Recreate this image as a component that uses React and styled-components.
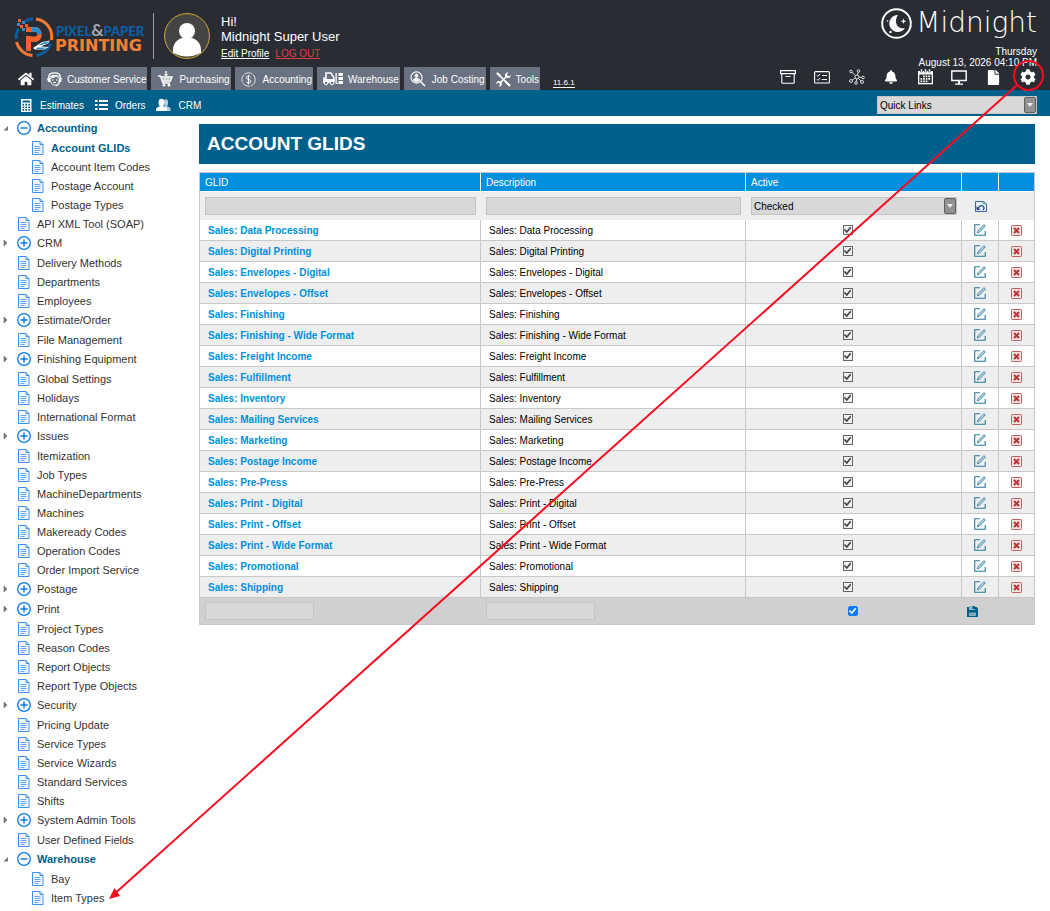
import React from "react";
import styled, { createGlobalStyle, css } from "styled-components";
import {
  FaHome,
  FaBell,
  FaCog,
  FaFile,
} from "react-icons/fa";

const GlobalStyle = createGlobalStyle`
  * {
    box-sizing: border-box;
  }
  body {
    margin: 0;
    background: #ffffff;
    color: #000000;
    font-family: "Liberation Sans", Arial, Helvetica, sans-serif;
    font-size: 10px;
  }
  button, input, select {
    font: inherit;
    color: inherit;
    margin: 0;
  }
  a {
    color: inherit;
    text-decoration: none;
  }
  ul {
    list-style: none;
    margin: 0;
    padding: 0;
  }
  svg {
    display: block;
    flex: none;
  }
`;

const Page = styled.div`
  position: relative;
`;

const Header = styled.header`
  display: flex;
  justify-content: space-between;
  min-height: 90px;
  background: #2a2c34;
  color: #ffffff;
`;

const HeaderLeft = styled.div`
  display: flex;
  flex-direction: column;
  justify-content: space-between;
  padding: 13px 0 0 14px;
`;

const Brand = styled.div`
  display: flex;
  align-items: center;
  height: 46px;
`;

const Divider = styled.span`
  width: 1px;
  height: 46px;
  margin: 0 10px 0 8px;
  background: #9a9ca3;
`;

const Profile = styled.div`
  margin-left: 11px;
  padding-top: 2px;
  font-size: 13px;
  line-height: 15px;
`;

const ProfileLinks = styled.div`
  display: flex;
  gap: 6px;
  margin-top: 4px;
  font-size: 10px;
  line-height: 12px;
  a {
    text-decoration: underline;
  }
  a:last-child {
    color: #e23b42;
  }
`;

const Tabs = styled.nav`
  display: flex;
  align-items: center;
  gap: 4px;
`;

const HomeLink = styled.a`
  padding: 1px 2px 0 4px;
  margin-right: 1px;
`;

const Tab = styled.a`
  display: flex;
  align-items: center;
  gap: 5px;
  height: 23px;
  padding: 1px 1px 0 6px;
  background: #6a7281;
  white-space: nowrap;
`;

const Version = styled.a`
  align-self: flex-end;
  margin: 0 0 2px 9px;
  font-size: 8px;
  line-height: 9px;
  border-bottom: 1px solid #ffffff;
`;

const HeaderRight = styled.div`
  display: flex;
  flex-direction: column;
  align-items: flex-end;
  padding: 5px 13px 0 0;
`;

const Midnight = styled.div`
  display: flex;
  align-items: center;
  gap: 4px;
  height: 36px;
  font-family: "DejaVu Sans", sans-serif;
  font-size: 28px;
  font-weight: 200;
  line-height: 36px;
`;

const Clock = styled.div`
  margin-top: 5px;
  line-height: 11px;
  text-align: right;
`;

const Shortcuts = styled.nav`
  display: flex;
  justify-content: space-between;
  width: 258px;
  a {
    display: flex;
    align-items: center;
    justify-content: center;
    width: 18px;
    height: 18px;
  }
`;

const SubBar = styled.div`
  display: flex;
  align-items: center;
  justify-content: space-between;
  height: 26px;
  padding: 4px 13px 0 20px;
  background: #00608c;
  color: #ffffff;
`;

const SubNav = styled.nav`
  display: flex;
  gap: 11px;
  a {
    display: flex;
    align-items: center;
    gap: 7px;
  }
`;

const SelectBox = styled.div`
  position: relative;
  width: ${(props) => props.width || "100%"};
  color: #000000;
  select {
    display: block;
    appearance: none;
    width: 100%;
    height: 18px;
    padding: 0 20px 0 2px;
    background: #d8d8d8;
    border: 1px solid #c4c4c4;
    border-radius: 0;
  }
  svg {
    position: absolute;
    top: 1px;
    right: 1px;
    pointer-events: none;
  }
`;

const Main = styled.div`
  display: flex;
  align-items: flex-start;
`;

const Sidebar = styled.nav`
  flex: none;
  width: 199px;
  padding: 2px 0 3px;
`;

const TreeLink = styled.a`
  display: flex;
  align-items: center;
  gap: 6px;
  height: ${(props) => (props.$branch ? 20 : 19)}px;
  padding-left: ${(props) => (props.$child ? 17 : 3)}px;
  font-size: 11px;
  color: #333333;
  white-space: nowrap;
  ${(props) =>
    props.$active &&
    css`
      font-weight: 700;
      color: #00608c;
    `}
`;

const TreeIcons = styled.span`
  display: flex;
  align-items: center;
  svg:first-child {
    margin-right: 8px;
  }
`;

const Content = styled.main`
  flex: 1;
  min-width: 0;
  padding: 8px 15px 0 0;
`;

const Title = styled.h1`
  margin: 0 0 8px;
  padding: 0 8px;
  background: #00608c;
  color: #ffffff;
  font-size: 19px;
  font-weight: 700;
  line-height: 40px;
`;

const Table = styled.table`
  width: 100%;
  table-layout: fixed;
  border-collapse: separate;
  border-spacing: 0;
  border: 1px solid #c8c8c8;
  th,
  td {
    height: 21px;
    padding: 0;
    text-align: left;
  }
`;

const HeadCell = styled.th`
  && {
    height: 19px;
    padding: 0 5px;
  }
  background: #0090dd;
  color: #ffffff;
  font-weight: 400;
  border-bottom: 1px solid #ffffff;
  &:not(:last-child) {
    border-right: 1px solid #ffffff;
  }
`;

const FilterRow = styled.tr`
  background: #eeeeee;
  && td {
    height: 28px;
    padding: 0 5px;
  }
`;

const Row = styled.tr`
  background: ${(props) => (props.$shaded ? "#eeeeee" : "#ffffff")};
  td {
    border-bottom: 1px solid #c8c8c8;
  }
  td:not(:last-child) {
    border-right: 1px solid #c8c8c8;
  }
  && td:nth-child(-n + 2) {
    padding-left: 8px;
  }
  && td:nth-child(3) {
    padding-right: 12px;
  }
`;

const AddRow = styled.tr`
  background: #d0d0d0;
  && td {
    height: 26px;
    padding: 0 8px 0 5px;
  }
`;

const TextInput = styled.input`
  display: block;
  width: ${(props) => props.width || "100%"};
  height: 18px;
  padding: 0 2px;
  background: #d8d8d8;
  border: 1px solid #c4c4c4;
`;

const RecordLink = styled.a`
  color: #0090dd;
  font-weight: 700;
`;

const Tick = styled.input`
  appearance: none;
  display: block;
  width: 10px;
  height: 10px;
  margin: 0 auto;
  background: ${(props) => (props.$on ? "#0a7aff" : "#f2f2f2")};
  border: 1px solid ${(props) => (props.$on ? "#0a7aff" : "#666666")};
  border-radius: ${(props) => (props.$on ? 2 : 0)}px;
  &:checked::after {
    content: "";
    display: block;
    width: 8px;
    height: 8px;
    background: ${(props) => (props.$on ? "#ffffff" : "#444444")};
    clip-path: polygon(4% 50%, 20% 36%, 40% 60%, 82% 8%, 98% 22%, 42% 92%);
  }
`;

const IconButton = styled.button`
  display: block;
  margin: ${(props) => (props.$start ? "0" : "0 auto")};
  padding: 0;
  border: 0;
  background: none;
`;

const Callout = styled.svg`
  position: absolute;
  top: 0;
  left: 0;
  width: 100%;
  pointer-events: none;
`;

const PrintingLogo = () => (
  <svg width="131" height="44" viewBox="14 14 131 44" role="img">
    <g fill="none" strokeWidth="3">
      <path d="M36 19a18 18 0 0 1 15.500 21" stroke="#f47a33" />
      <path d="M16.500 42a18 18 0 0 0 16 13.500" stroke="#f47a33" />
      <path d="M50.500 43.500a18 18 0 0 1-14 12" stroke="#0a5c9c" />
      <path d="M16.200 39a18 18 0 0 1 2-10M25 21.200a18 18 0 0 1 8-2.400" stroke="#0a5c9c" />
    </g>
    <path d="M26 27h9c9 0 9 15 0 15h-4v9h-5V36h9c3 0 3-4 0-4h-9z" fill="#f4622c" />
    <path d="M32 27h3c5 0 7 5 6 8-3 0-4-3-9-3z" fill="#2d8ccb" />
    <path d="M31 32h4c3 0 3 4.500 0 4.500h-4z" fill="#2a2c34" />
    <path d="M18 19h3v3h-3zM20 25h3v3h-3zM25 24h3v3h-3z" fill="#f4622c" />
    <path d="M22 21h3v3h-3zM17 23h3v3h-3zM22 28h3v3h-3z" fill="#2d8ccb" />
    <path d="M33 48l9-6 8-1.500-2 3-7 3 8 .5-5 2.500H35z" fill="#ffffff" />
    <path d="M38 45.500l5-3 6-1.300-2 2.300-6 1.500zM37 47.500h10l-4 1.500h-7z" fill="#2d8ccb" />
    <text x="56" y="36" fill="#0a62a5" fontFamily="Lato" fontWeight="900" fontSize="13">
      PIXEL
      <tspan fill="#a5a7ab" fontSize="17" fontWeight="700">&amp;</tspan>
      PAPER
    </text>
    <text x="55" y="51" fill="#f68034" fontFamily="DejaVu Sans" fontWeight="700" fontSize="16">
      PRINTING
    </text>
  </svg>
);

const Avatar = () => (
  <svg width="46" height="46" viewBox="0 0 46 46">
    <circle cx="23" cy="23" r="22.400" fill="#444444" stroke="#d5a932" />
    <circle cx="23" cy="18" r="8" fill="#ffffff" />
    <path d="M9 40v-3c0-17 28-17 28 0v3q-14 7-28 0z" fill="#ffffff" />
  </svg>
);

const MoonIcon = () => (
  <svg width="31" height="31" viewBox="0 0 31 31">
    <circle cx="15.500" cy="15.500" r="14.300" fill="none" stroke="#ffffff" strokeWidth="2" />
    <path d="M17 7a8.500 8.500 0 1 0 7 13c-7 2-12-6-7-13z" fill="#ffffff" />
    <path d="M22.500 10.500l.8 2 2 .8-2 .8-.8 2-.8-2-2-.8 2-.8z" fill="#ffffff" />
    <circle cx="6.500" cy="13" r=".8" fill="#ffffff" />
    <circle cx="9.500" cy="24" r="1.200" fill="#ffffff" />
  </svg>
);

const ServiceIcon = () => (
  <svg width="15" height="15" viewBox="0 0 15 15">
    <path d="M2 7C1 2 4 .8 7.500 .8S14 2 13 7" fill="none" stroke="#ffffff" strokeWidth="1.300" />
    <path d="M3 6c2 0 5-1 6-2 1 1 2 2 3.500 2-.2 5-2 7-5 7S3.200 10 3 6z" fill="none" stroke="#ffffff" />
    <path d="M3 5c1-3 8-3 9.500 0L9 4 6 5.500zM0 6h3v4H1zM12 6h3l-1 4h-2z" fill="#ffffff" />
    <path d="M5 8h1.500M9 8h1.500M6 10.500h3M12.500 10q0 4-4 4" stroke="#ffffff" fill="none" />
  </svg>
);

const CartIcon = () => (
  <svg width="17" height="16" viewBox="0 0 17 16">
    <path d="M1 5h2.500L6 12h7M4 6h11l-1.500 4H5.500" fill="none" stroke="#ffffff" strokeWidth="1.400" />
    <path d="M5 8h9M8 6v4M11 6v4" stroke="#ffffff" />
    <path d="M8.400 0h1.400v3h1.700L9 5.500 6.700 3h1.700z" fill="#ffffff" />
    <circle cx="7" cy="14.200" r="1.400" fill="#ffffff" />
    <circle cx="12" cy="14.200" r="1.400" fill="#ffffff" />
  </svg>
);

const DollarIcon = () => (
  <svg width="17" height="15" viewBox="0 0 17 15">
    <circle cx="7.500" cy="7.500" r="6.700" fill="none" stroke="#ffffff" strokeWidth=".8" strokeDasharray="8 1" />
    <path d="M9.700 5.300Q9 4 7.500 4 5.300 4 5.300 5.700 5.300 7 7.500 7.400q2.300.5 2.300 2 0 1.700-2.300 1.700Q5.700 11 5.200 9.700M7.500 2.800v9.500" fill="none" stroke="#ffffff" strokeWidth=".9" />
  </svg>
);

const ForkliftIcon = () => (
  <svg width="20" height="14" viewBox="0 0 20 14">
    <path d="M1 10V6h2V1h5l3 5v4" fill="none" stroke="#ffffff" strokeWidth="1.500" />
    <path d="M0 7h11v4H0zM12.500 1h1.300v10h1.200v1h-2.500zM15.500 1H20v3h-4.500zM15.500 5H20v3h-4.500zM15.500 9H20v3h-4.500z" fill="#ffffff" />
    <circle cx="3" cy="11" r="1.800" fill="#6a7281" stroke="#ffffff" />
    <circle cx="9" cy="11" r="1.800" fill="#6a7281" stroke="#ffffff" />
  </svg>
);

const CostingIcon = () => (
  <svg width="17" height="16" viewBox="0 0 17 16">
    <circle cx="6.500" cy="6.500" r="5.600" fill="none" stroke="#ffffff" strokeWidth="1.100" />
    <circle cx="6.500" cy="4.700" r="2" fill="#ffffff" />
    <path d="M2.800 9.300c.6-3.400 6.800-3.400 7.400 0q-3.500 3.500-7.400 0z" fill="#ffffff" />
    <path d="M10.500 10.500l4.500 4.500" stroke="#ffffff" strokeWidth="1.500" />
  </svg>
);

const ToolsIcon = () => (
  <svg width="15" height="15" viewBox="0 0 15 15">
    <path d="M3 3l9 9M11.500 3.500l-8 8" stroke="#ffffff" strokeWidth="1.600" />
    <path d="M0 1.500L1.500.3l3 2.200.3 2.300-2-.5zM9.500 8.500l5.300 4.500-1.600 1.700-4.700-5z" fill="#ffffff" />
    <path d="M12.500 .3L11 2l.4 1.800 1.900.4 1.500-1.500c.2 2.500-2 4-4 3L9 4c-.3-2 1-3.700 3.500-3.700zM2.500 14.700L4 13l-.4-1.800-1.900-.4L.2 12.300C0 9.800 2.200 8.300 4.200 9.300L6 11c.3 2-1 3.700-3.500 3.700z" fill="#ffffff" />
  </svg>
);

const CalculatorIcon = () => (
  <svg width="13" height="13" viewBox="0 0 13 13">
    <path d="M1 0h10.500v13H1z" fill="#ffffff" />
    <path d="M2.500 1.500H10v2H2.500z" fill="#00608c" />
    <path d="M2.500 5.600H10M2.500 8.200H10M2.500 10.900H10" stroke="#00608c" strokeWidth="1.600" strokeDasharray="1.600 1.300" />
  </svg>
);

const ListIcon = () => (
  <svg width="13" height="12" viewBox="0 0 13 12" stroke="#ffffff" strokeWidth="2">
    <path d="M0 2h2.500M4 2h9M0 6h2.500M4 6h9M0 10h2.500M4 10h9" />
  </svg>
);

const PeopleIcon = () => (
  <svg width="15" height="14" viewBox="0 0 15 14">
    <path d="M8 2q3-2 4 1v3l-1 2 3.500 2v3H9z" fill="#ffffff" opacity=".7" />
    <path d="M2.500 4C2.500-.5 8.500-.5 8.500 4c0 2-.8 3-1.300 4L11 10.500V13H0v-2.500L3.800 8C3 7 2.500 6 2.500 4z" fill="#ffffff" />
  </svg>
);

const ArchiveIcon = () => (
  <svg width="16" height="14" viewBox="0 0 16 14" fill="none" stroke="#ffffff" strokeWidth="1.100">
    <path d="M.6.6h14.800v3H.6zM1.800 3.600v8.600q0 1 1 1h10.400q1 0 1-1V3.600M5.500 6.500h5" />
  </svg>
);

const ChecklistIcon = () => (
  <svg width="16" height="13" viewBox="0 0 16 13" fill="none" stroke="#ffffff">
    <rect x=".6" y=".6" width="14.800" height="11.400" rx="1" strokeWidth="1.100" />
    <path d="M3 4.300l1 1 2-2.200M3 8.300l1 1 2-2.200M8 4.500h5M7.500 8.500H13" />
  </svg>
);

const NetworkIcon = () => (
  <svg width="16" height="16" viewBox="0 0 16 16" fill="none" stroke="#ffffff" strokeWidth=".8">
    <circle cx="8" cy="8" r="2" />
    <circle cx="2" cy="2.500" r="1.300" />
    <circle cx="9.500" cy="2" r="1.300" />
    <circle cx="14" cy="8.500" r="1.300" />
    <circle cx="13" cy="13" r="1.500" />
    <circle cx="7" cy="14" r="1.300" />
    <circle cx="2" cy="12" r="1.500" />
    <path d="M3 3.300l3.500 3.300M9.200 3.300L8.500 6M10 8.200l2.700.2M9.500 9.500l2.500 2.400M7.700 10l-.5 2.700M6.300 9L3 11.300" />
  </svg>
);

const CalendarIcon = () => (
  <svg width="17" height="16" viewBox="0 0 17 16">
    <path d="M1 2h15v13.300H1z" fill="#ffffff" />
    <path d="M2.300 5.500h12.400v8.500H2.300z" fill="#2a2c34" />
    <path d="M3.500 0h2v3h-2zM7.500 0h2v3h-2zM11.500 0h2v3h-2z" fill="#ffffff" stroke="#2a2c34" strokeWidth=".6" />
    <path d="M6 7.300h8M3.500 9.800h10.500M3.500 12.300h8" stroke="#ffffff" strokeWidth="1.700" strokeDasharray="1.700 .9" />
  </svg>
);

const MonitorIcon = () => (
  <svg width="16" height="15" viewBox="0 0 16 15">
    <path d="M.8 1h14.400v9.500H.8z" fill="none" stroke="#ffffff" strokeWidth="1.400" />
    <path d="M7 11h2v2.500h3v1.200H4v-1.200h3z" fill="#ffffff" />
  </svg>
);

const ArrowIcon = () => (
  <svg width="12" height="16" viewBox="0 0 12 16">
    <rect x=".5" y=".5" width="11" height="15" rx="1.500" fill="#929292" stroke="#5e5e5e" />
    <path d="M3 6h6l-3 4z" fill="#ececec" />
  </svg>
);

const Caret = ({ branch, open }) => (
  <svg width="6" height="8" viewBox="0 0 6 8">
    {branch && !open && <path d="M1 1l3 3-3 3z" fill="#777777" stroke="#777777" strokeWidth=".7" />}
    {open && <path d="M5 2v4.500H.5z" fill="#777777" />}
  </svg>
);

const BranchIcon = ({ open }) => (
  <svg width="14" height="14" viewBox="0 0 14 14" fill="none" stroke="#0878f0">
    <circle cx="7" cy="7" r="6.300" strokeWidth="1.300" />
    <path d={open ? "M3.500 7h7" : "M3.500 7h7M7 3.500v7"} strokeWidth="1.400" />
  </svg>
);

const PageIcon = () => (
  <svg width="14" height="14" viewBox="0 0 14 14" fill="none" stroke="#3b8ff0">
    <path d="M1.500.5h7.500l3 3v10H1.500z" fill="#f4f9ff" />
    <path d="M9 .5v3h3" />
    <path d="M3.500 5.500h6M3.500 7.500h6M3.500 9.500h6M3.500 11.500h4" strokeWidth=".8" />
  </svg>
);

const ResetIcon = () => (
  <svg width="12" height="11" viewBox="0 0 12 11" fill="none" stroke="#3c62a0">
    <path d="M.5.500h8l3 2.500v7.500H.5z" fill="#e5edf7" />
    <path d="M7.500 .5l1 2.500h3" stroke="#4c9b91" />
    <path d="M3.500 7C4.500 4 8 4 9 6.500q.3 1.500-1 2.500" stroke="#27427e" strokeWidth="1.200" />
    <path d="M1.500 5v4h4z" fill="#27427e" stroke="none" />
  </svg>
);

const EditIcon = () => (
  <svg width="12" height="12" viewBox="0 0 12 12" fill="none" stroke="#25799f">
    <path d="M6 .8H.7v10.400h10.500V7" strokeWidth="1.100" />
    <path d="M3.300 9l.6-2.300L10 .6l1.400 1.300-6 6.300z" fill="#b9d5e2" strokeWidth=".8" />
  </svg>
);

const DeleteIcon = () => (
  <svg width="11" height="11" viewBox="0 0 11 11">
    <rect x=".5" y=".5" width="10" height="10" rx=".8" fill="#f8e4e4" stroke="#c0605f" />
    <path d="M3 3l5 5M8 3L3 8" stroke="#b23b3b" strokeWidth="2.200" />
  </svg>
);

const SaveIcon = () => (
  <svg width="11" height="11" viewBox="0 0 11 11">
    <path d="M0 1h9.500L11 2.500V11H0z" fill="#00608c" />
    <path d="M2 0h6v4H2z" fill="#91b5c6" />
    <path d="M5.500 0H8v3H5.500z" fill="#00608c" />
    <path d="M2 6.500h7V10H2z" fill="#80a9bd" />
  </svg>
);

const tabs = [
  ["Customer Service", ServiceIcon],
  ["Purchasing", CartIcon],
  ["Accounting", DollarIcon],
  ["Warehouse", ForkliftIcon],
  ["Job Costing", CostingIcon],
  ["Tools", ToolsIcon],
];

const shortcuts = [
  ["Archive", <ArchiveIcon />],
  ["Checklist", <ChecklistIcon />],
  ["Network", <NetworkIcon />],
  ["Notifications", <FaBell size={14} />],
  ["Calendar", <CalendarIcon />],
  ["Monitor", <MonitorIcon />],
  ["Documents", <FaFile size={15} />],
  ["Settings", <FaCog size={16} />],
];

const tree = [
  {
    name: "Accounting",
    items: [
      "Account GLIDs",
      "Account Item Codes",
      "Postage Account",
      "Postage Types",
    ],
  },
  { name: "API XML Tool (SOAP)" },
  { name: "CRM", branch: true },
  { name: "Delivery Methods" },
  { name: "Departments" },
  { name: "Employees" },
  { name: "Estimate/Order", branch: true },
  { name: "File Management" },
  { name: "Finishing Equipment", branch: true },
  { name: "Global Settings" },
  { name: "Holidays" },
  { name: "International Format" },
  { name: "Issues", branch: true },
  { name: "Itemization" },
  { name: "Job Types" },
  { name: "MachineDepartments" },
  { name: "Machines" },
  { name: "Makeready Codes" },
  { name: "Operation Codes" },
  { name: "Order Import Service" },
  { name: "Postage", branch: true },
  { name: "Print", branch: true },
  { name: "Project Types" },
  { name: "Reason Codes" },
  { name: "Report Objects" },
  { name: "Report Type Objects" },
  { name: "Security", branch: true },
  { name: "Pricing Update" },
  { name: "Service Types" },
  { name: "Service Wizards" },
  { name: "Standard Services" },
  { name: "Shifts" },
  { name: "System Admin Tools", branch: true },
  { name: "User Defined Fields" },
  { name: "Warehouse", items: ["Bay", "Item Types"] },
];

const glids = [
  "Data Processing",
  "Digital Printing",
  "Envelopes - Digital",
  "Envelopes - Offset",
  "Finishing",
  "Finishing - Wide Format",
  "Freight Income",
  "Fulfillment",
  "Inventory",
  "Mailing Services",
  "Marketing",
  "Postage Income",
  "Pre-Press",
  "Print - Digital",
  "Print - Offset",
  "Print - Wide Format",
  "Promotional",
  "Shipping",
];

const TreeItem = ({ name, items, branch, child }) => {
  const open = Boolean(items);
  return (
    <li>
      <TreeLink
        href="#"
        $branch={branch || open}
        $child={child}
        $active={open || name === "Account GLIDs"}
      >
        <TreeIcons>
          <Caret branch={branch} open={open} />
          {branch || open ? <BranchIcon open={open} /> : <PageIcon />}
        </TreeIcons>
        {name}
      </TreeLink>
      {open && (
        <ul>
          {items.map((item) => (
            <TreeItem key={item} name={item} child />
          ))}
        </ul>
      )}
    </li>
  );
};

const GlidTable = () => (
  <Table>
    <colgroup>
      <col style={{ width: `${(281 / 834) * 100}%` }} />
      <col style={{ width: `${(265 / 834) * 100}%` }} />
      <col style={{ width: `${(216 / 834) * 100}%` }} />
      <col style={{ width: `${(37 / 834) * 100}%` }} />
      <col />
    </colgroup>
    <thead>
      <tr>
        <HeadCell>GLID</HeadCell>
        <HeadCell>Description</HeadCell>
        <HeadCell>Active</HeadCell>
        <HeadCell />
        <HeadCell />
      </tr>
    </thead>
    <tbody>
      <FilterRow>
        <td>
          <TextInput aria-label="GLID" />
        </td>
        <td>
          <TextInput aria-label="Description" />
        </td>
        <td>
          <SelectBox>
            <select aria-label="Active">
              <option>Checked</option>
            </select>
            <ArrowIcon />
          </SelectBox>
        </td>
        <td>
          <IconButton aria-label="Reset">
            <ResetIcon />
          </IconButton>
        </td>
        <td />
      </FilterRow>
      {glids.map((name, index) => (
        <Row key={name} $shaded={index % 2 === 1}>
          <td>
            <RecordLink href="#">Sales: {name}</RecordLink>
          </td>
          <td>Sales: {name}</td>
          <td>
            <Tick type="checkbox" defaultChecked disabled aria-label="Active" />
          </td>
          <td>
            <IconButton aria-label="Edit">
              <EditIcon />
            </IconButton>
          </td>
          <td>
            <IconButton aria-label="Delete">
              <DeleteIcon />
            </IconButton>
          </td>
        </Row>
      ))}
      <AddRow>
        <td>
          <TextInput width="109px" aria-label="New GLID" />
        </td>
        <td>
          <TextInput width="109px" aria-label="New description" />
        </td>
        <td>
          <Tick type="checkbox" defaultChecked $on aria-label="New active" />
        </td>
        <td>
          <IconButton $start aria-label="Save">
            <SaveIcon />
          </IconButton>
        </td>
        <td />
      </AddRow>
    </tbody>
  </Table>
);

const App = () => (
  <Page>
    <GlobalStyle />
    <Header>
      <HeaderLeft>
        <Brand>
          <PrintingLogo />
          <Divider />
          <Avatar />
          <Profile>
            <div>Hi!</div>
            <div>Midnight Super User</div>
            <ProfileLinks>
              <a href="#">Edit Profile</a>
              <a href="#">LOG OUT</a>
            </ProfileLinks>
          </Profile>
        </Brand>
        <Tabs>
          <HomeLink href="#" aria-label="Home">
            <FaHome size={16} />
          </HomeLink>
          {tabs.map(([label, Icon]) => (
            <Tab href="#" key={label}>
              <Icon />
              {label}
            </Tab>
          ))}
          <Version href="#">11.6.1</Version>
        </Tabs>
      </HeaderLeft>
      <HeaderRight>
        <Midnight>
          <MoonIcon />
          Midnight
        </Midnight>
        <Clock>
          <div>Thursday</div>
          <div>August 13, 2026 04:10 PM</div>
        </Clock>
        <Shortcuts>
          {shortcuts.map(([label, icon]) => (
            <a href="#" key={label} aria-label={label}>
              {icon}
            </a>
          ))}
        </Shortcuts>
      </HeaderRight>
    </Header>
    <SubBar>
      <SubNav>
        <a href="#">
          <CalculatorIcon />
          Estimates
        </a>
        <a href="#">
          <ListIcon />
          Orders
        </a>
        <a href="#">
          <PeopleIcon />
          CRM
        </a>
      </SubNav>
      <SelectBox width="160px">
        <select aria-label="Quick Links">
          <option>Quick Links</option>
        </select>
        <ArrowIcon />
      </SelectBox>
    </SubBar>
    <Main>
      <Sidebar>
        <ul>
          {tree.map((node) => (
            <TreeItem key={node.name} {...node} />
          ))}
        </ul>
      </Sidebar>
      <Content>
        <Title>ACCOUNT GLIDS</Title>
        <GlidTable />
      </Content>
    </Main>
    <Callout viewBox="0 0 1050 911" aria-hidden="true">
      <g stroke="#fb0a20" strokeWidth="2" fill="none">
        <circle cx="1028.500" cy="75.500" r="14.500" />
        <path d="M1017 85L116 892.500" />
      </g>
      <path d="M109 899l5.500-11 5.500 8z" fill="#fb0a20" />
    </Callout>
  </Page>
);

export default App;
